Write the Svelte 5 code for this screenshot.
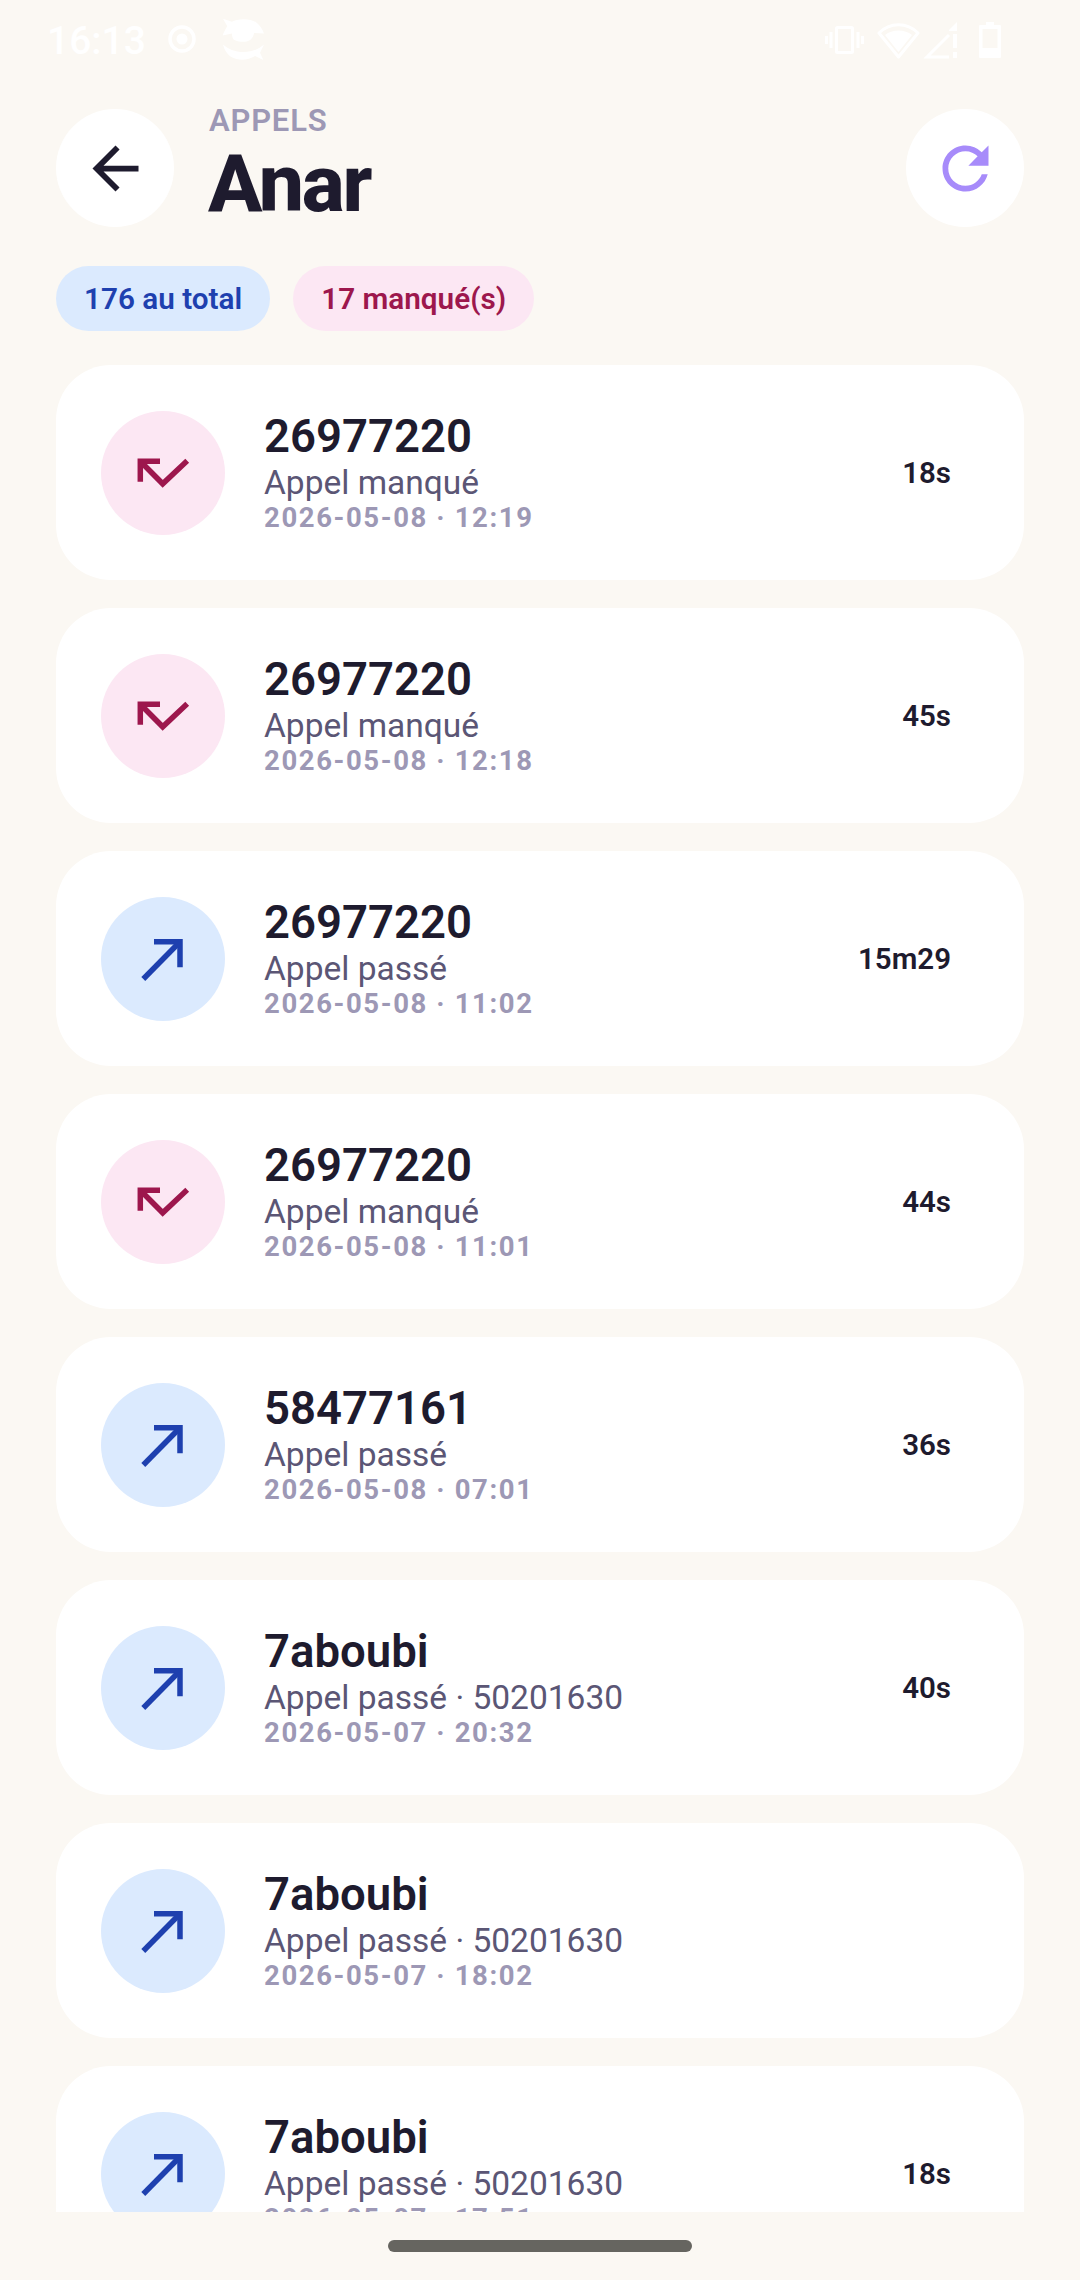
<script>
  const calls = [
    { n: '26977220', t: 'Appel manqué', d: '2026-05-08 · 12:19', r: '18s', m: true },
    { n: '26977220', t: 'Appel manqué', d: '2026-05-08 · 12:18', r: '45s', m: true },
    { n: '26977220', t: 'Appel passé', d: '2026-05-08 · 11:02', r: '15m29', m: false },
    { n: '26977220', t: 'Appel manqué', d: '2026-05-08 · 11:01', r: '44s', m: true },
    { n: '58477161', t: 'Appel passé', d: '2026-05-08 · 07:01', r: '36s', m: false },
    { n: '7aboubi', t: 'Appel passé · 50201630', d: '2026-05-07 · 20:32', r: '40s', m: false },
    { n: '7aboubi', t: 'Appel passé · 50201630', d: '2026-05-07 · 18:02', r: '', m: false },
    { n: '7aboubi', t: 'Appel passé · 50201630', d: '2026-05-07 · 17:51', r: '18s', m: false }
  ];
</script>

<div class="screen">
  <div class="status">
    <span class="time">16:13</span>
    <svg class="dot" width="30" height="30" viewBox="0 0 30 30"><circle cx="15" cy="15" r="12" fill="none" stroke="#fff" stroke-width="3.500"/><circle cx="15" cy="15" r="5.500" fill="#fff"/></svg>
    <svg class="mask" width="43" height="43" viewBox="545 25 130 130" fill="#fff">
      <path d="M548 27L575 36C590 27 630 25 648 38C660 47 668 60 672 72L642 70C640 80 636 90 620 96C605 99 590 96 580 90C576 84 575 78 575 72L547 78C550 68 556 58 561 50z"/>
      <path d="M548 105C562 118 585 128 610 128C635 128 655 120 672 105L660 130L670 152L645 140C625 153 595 155 575 144C560 135 552 120 548 105z"/>
    </svg>
    <span class="spacer"></span>
    <svg class="ic" width="40" height="30" viewBox="0 0 40 30" fill="none" stroke="#fff" stroke-width="3"><rect x="11.500" y="2.500" width="16" height="25" rx="1"/><path d="M6 7v16M1.500 11v8M33 7v16M37.500 11v8"/></svg>
    <svg class="ic wifi" width="44" height="38" viewBox="0 0 44 38" fill="none" stroke="#fff" stroke-width="3" stroke-linejoin="round"><path d="M2 11C13 0 30 0 41 11L21.500 35z" /><path d="M8 13c7-6 20-6 27 0L21.500 30z" fill="#fff" stroke="none"/></svg>
    <svg class="ic sig" width="38" height="38" viewBox="0 0 38 38" fill="none" stroke="#fff" stroke-width="3"><path d="M26 13L4 35h22" /><path d="M26 8l8-8v9h-8z" fill="#fff" stroke="none"/><path d="M32 12v14M32 30v6" stroke-width="4"/></svg>
    <svg class="ic bat" width="24" height="38" viewBox="0 0 24 38"><path d="M8 1h8v3h6a1 1 0 0 1 1 1v31a1 1 0 0 1-1 1H2a1 1 0 0 1-1-1V5a1 1 0 0 1 1-1h6zM4.500 8v19h15V8z" fill="#fff" fill-rule="evenodd"/></svg>
  </div>

  <header>
    <button class="round" aria-label="Retour">
      <svg width="69" height="69" viewBox="0 0 24 24" fill="#1e1b2e"><path d="M20 11H7.830l5.590-5.590L12 4l-8 8 8 8 1.410-1.410L7.830 13H20v-2z"/></svg>
    </button>
    <div class="heading">
      <div class="eyebrow">APPELS</div>
      <div class="title">Anar</div>
    </div>
    <button class="round" aria-label="Actualiser">
      <svg width="69" height="69" viewBox="0 0 24 24" fill="#a78bfa"><path d="M17.650 6.350A7.950 7.950 0 0 0 12 4c-4.420 0-7.990 3.580-7.990 8s3.570 8 7.990 8c3.730 0 6.840-2.550 7.730-6h-2.080c-.82 2.330-3.040 4-5.650 4-3.310 0-6-2.690-6-6s2.690-6 6-6c1.660 0 3.140.69 4.220 1.780L13 11h7V4l-2.350 2.350z"/></svg>
    </button>
  </header>

  <div class="pills">
    <span class="pill blue">176 au total</span>
    <span class="pill pink">17 manqué(s)</span>
  </div>

  <div class="list">
    {#each calls as c}
      <div class="card">
        <div class="badge" class:miss={c.m}>
          {#if c.m}
            <svg width="124" height="124" viewBox="0 0 124 124" fill="none" stroke="#9d174d" stroke-width="5.500"><path d="M59 50.200H39.300V70.700"/><path d="M39.300 50.200L61.700 72.800 86.200 49.800"/></svg>
          {:else}
            <svg width="124" height="124" viewBox="0 0 124 124" fill="none" stroke="#1e40af" stroke-width="5.500"><path d="M53 44.700H79V70.300"/><path d="M79 44.700L42.300 82"/></svg>
          {/if}
        </div>
        <div class="info">
          <div class="name">{c.n}</div>
          <div class="sub">{c.t}</div>
          <div class="date">{c.d}</div>
        </div>
        {#if c.r}<div class="dur">{c.r}</div>{/if}
      </div>
    {/each}
  </div>

  <div class="nav"><span class="handle"></span></div>
</div>

<style>
  :global(body) { margin: 0; background: #fbf8f3; }
  .screen {
    width: 1080px; height: 2280px; background: #fbf8f3; overflow: hidden;
    display: flex; flex-direction: column;
    font-family: Roboto, "Liberation Sans", sans-serif; color: #1e1b2e;
  }
  .status { height: 109px; box-sizing: border-box; padding: 18px 78px 0 47px; display: flex; align-items: flex-start; flex: none; }
  .time { color: #fff; font-size: 39px; line-height: 46px; font-weight: 500; width: 120px; }
  .dot { margin-top: 6px; }
  .mask { margin-left: 25px; }
  .spacer { flex: 1; }
  .ic { margin-top: 7px; }
  .wifi { margin-left: 12px; margin-top: 4px; }
  .sig { margin-left: 2px; margin-top: 4px; }
  .bat { margin-left: 17px; margin-top: 3px; }

  header { display: flex; align-items: center; padding: 0 56px; height: 118px; flex: none; }
  .round { width: 118px; height: 118px; border-radius: 50%; border: 0; background: #fff; padding: 0; display: flex; align-items: center; justify-content: center; flex: none; }
  .heading { flex: 1; margin-left: 34px; display: flex; flex-direction: column; padding-bottom: 7px; }
  .eyebrow { color: #9d98b5; font-size: 31px; line-height: 36px; font-weight: 600; letter-spacing: 0.8px; padding-left: 1px; }
  .title { font-size: 80.500px; line-height: 84px; font-weight: 800; letter-spacing: -2.200px; margin-top: 3px; }

  .pills { display: flex; gap: 23px; padding: 39px 56px 0; flex: none; }
  .pill { height: 65px; line-height: 65px; border-radius: 33px; padding: 0 28px; font-size: 29.700px; font-weight: 600; box-sizing: border-box; }
  .blue { background: #dbeafe; color: #1e40af; }
  .pink { background: #fce7f3; color: #9d174d; }

  .list { margin-top: 34px; flex: 1; min-height: 0; overflow: hidden; padding: 0 56px; display: flex; flex-direction: column; gap: 28px; }
  .card { flex: none; height: 215px; box-sizing: border-box; background: #fff; border-radius: 55px; padding: 0 73px 0 45px; display: flex; align-items: center; }
  .badge { width: 124px; height: 124px; border-radius: 50%; background: #dbeafe; display: flex; align-items: center; justify-content: center; flex: none; }
  .badge.miss { background: #fce7f3; }
  .info { flex: 1; margin-left: 39px; display: flex; flex-direction: column; padding-bottom: 3px; }
  .name { font-size: 45.500px; line-height: 53px; font-weight: 600; }
  .sub { font-size: 33.500px; line-height: 39px; color: #5b5675; }
  .date { font-size: 27.500px; line-height: 31px; font-weight: 700; color: #9d98b5; letter-spacing: 1.600px; }
  .dur { font-size: 29.500px; font-weight: 600; }

  .nav { height: 68px; flex: none; display: flex; justify-content: center; padding-top: 28px; box-sizing: border-box; }
  .handle { width: 304px; height: 12px; border-radius: 6px; background: #666560; }
</style>
